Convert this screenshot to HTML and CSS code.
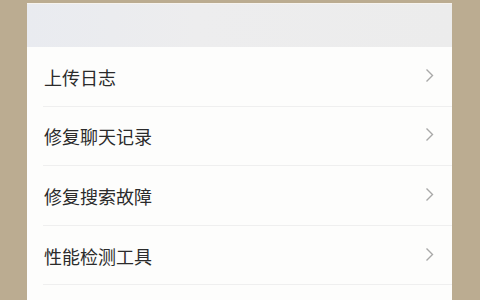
FILE: index.html
```html
<!DOCTYPE html>
<html lang="zh">
<head>
<meta charset="utf-8">
<link rel="stylesheet" href="styles.css">
</head>
<body>
<div class="card">
  <div class="header"></div>
  <ul class="list">
    <li class="row"><span class="label">上传日志</span><svg class="chev" viewBox="0 0 9 15"><path d="M1.5 1.5 L7.5 7.5 L1.5 13.5"/></svg></li>
    <li class="row"><span class="label">修复聊天记录</span><svg class="chev" viewBox="0 0 9 15"><path d="M1.5 1.5 L7.5 7.5 L1.5 13.5"/></svg></li>
    <li class="row"><span class="label">修复搜索故障</span><svg class="chev" viewBox="0 0 9 15"><path d="M1.5 1.5 L7.5 7.5 L1.5 13.5"/></svg></li>
    <li class="row"><span class="label">性能检测工具</span><svg class="chev" viewBox="0 0 9 15"><path d="M1.5 1.5 L7.5 7.5 L1.5 13.5"/></svg></li>
  </ul>
</div>
</body>
</html>
```
FILE: styles.css
```css
html, body {
  margin: 0;
  padding: 0;
  height: 100%;
  overflow: hidden;
}
body {
  background: #bbac91;
  font-family: "Noto Sans CJK SC", "Noto Sans", sans-serif;
}
.card {
  margin: 3px 0 0 27px;
  width: 425px;
  background: #fdfdfc;
  height: calc(100% - 3px);
  overflow: hidden;
}
.header {
  height: 43px;
  background: linear-gradient(90deg, #e9ebf0 0%, #ededee 40%, #ececec 100%);
  border-top: 1px solid #f6f3ee;
}
.list {
  list-style: none;
  margin: 0;
  padding: 0;
}
.row {
  display: flex;
  align-items: center;
  justify-content: space-between;
  margin-left: 16px;
  padding: 1px 18px 0 1px;
  box-sizing: border-box;
  height: 59.6px;
  border-bottom: 1px solid #efefef;
}
.label {
  font-size: 18px;
  color: #2b2b2b;
  line-height: 1;
}
.chev {
  width: 9px;
  height: 15px;
  fill: none;
  stroke: #a8a8a8;
  stroke-width: 1.4;
  margin-top: -3px;
}
```
